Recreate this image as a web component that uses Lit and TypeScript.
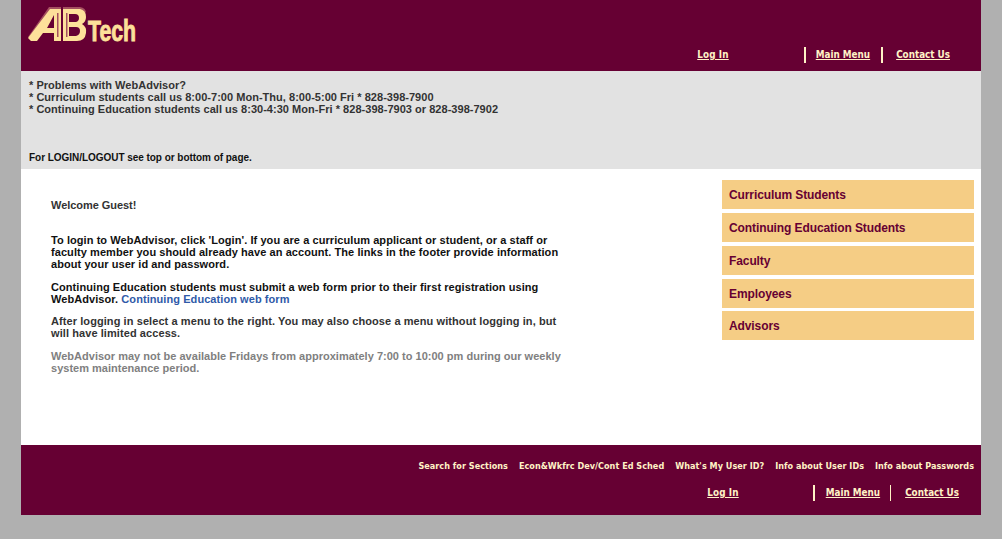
import { LitElement, html, css } from "lit";
import { customElement } from "lit/decorators.js";

@customElement("app-root")
export class AppRoot extends LitElement {
  static styles = css`
    :host { display: block; min-height: 539px; background: #b0b0b0; font-family: "Liberation Sans", Arial, sans-serif; }
    .page { width: 960px; margin-left: 21px; }
    a { color: inherit; }
    header { height: 71px; background: #660033; display: flex; justify-content: space-between; box-sizing: border-box; }
    .logo { display: block; margin: 7px 0 0 7px; width: 110px; height: 36px; overflow: visible; }
    .logo-text { font-family: "Liberation Sans", Arial, sans-serif; font-weight: 700; font-size: 29px; fill: #fde09a; stroke: #fde09a; stroke-width: .9px; }
    .nav { display: flex; align-items: center; font-family: "DejaVu Sans Condensed", "DejaVu Sans", Verdana, sans-serif; font-weight: 700; font-size: 9.8px; color: #fff2c6; height: 16px; white-space: nowrap; }
    .nav a { line-height: 16px; }
    .nav .sep { width: 2px; height: 16px; background: #fff2c6; }
    .nav .login { margin-right: 75px; letter-spacing: .15px; }
    .nav .main { margin: 0 11px 0 10px; }
    .nav .contact { margin-left: 13px; }
    header .nav { align-self: flex-end; margin: 0 31px 8px 0; }
    .band { height: 98px; background: #e2e2e2; box-sizing: border-box; padding: 8px 8px 0; color: #333; font-size: 11px; line-height: 12px; font-weight: 700; letter-spacing: .03px; }
    .band .login-note { margin-top: 37px; color: #111; font-size: 10px; letter-spacing: -.04px; }
    .content { height: 276px; background: #fff; display: flex; justify-content: space-between; }
    .copy { width: 540px; padding: 30px 0 0 30px; font-size: 11px; line-height: 12px; font-weight: 700; letter-spacing: .07px; color: #111; }
    .copy p { margin: 0 0 11px; }
    .copy .welcome { margin-bottom: 23px; color: #333; letter-spacing: -.05px; }
    .copy .gap { margin-bottom: 10px; }
    .copy .dim { color: #333; letter-spacing: .08px; }
    .copy .muted { color: #808080; letter-spacing: .015px; }
    .copy a { color: #2f5aa8; text-decoration: none; }
    .menu { width: 252px; margin: 11px 7px 0 0; display: flex; flex-direction: column; gap: 4px; }
    .menu a { display: flex; align-items: center; height: 29px; padding-left: 7px; background: #f5cd85; color: #660033; font-size: 12px; font-weight: 700; letter-spacing: -.1px; text-decoration: none; }
    .menu a:last-child { margin-top: -1px; }
    footer { height: 70px; background: #660033; box-sizing: border-box; padding: 15px 7px 0 0; color: #fff2c6; display: flex; flex-direction: column; align-items: flex-end; }
    .links { display: flex; gap: 11px; font-family: "DejaVu Sans Condensed", "DejaVu Sans", Verdana, sans-serif; font-size: 9px; font-weight: 700; line-height: 12px; letter-spacing: .03px; white-space: nowrap; }
    .links a { text-decoration: none; }
    footer .nav { margin: 13px 15px 0 0; }
    footer .nav .login { margin-right: 74px; }
    footer .nav .main { margin: 0 10px 0 11px; }
    footer .nav .contact { margin-left: 14px; }
    footer .nav .sep.thin { width: 1px; }
  `;

  private nav(thin: boolean) {
    return html`<nav class="nav">
      <a class="login" href="#">Log In</a>
      <span class="sep"></span>
      <a class="main" href="#">Main Menu</a>
      <span class="sep ${thin ? "thin" : ""}"></span>
      <a class="contact" href="#">Contact Us</a>
    </nav>`;
  }

  render() {
    return html`<div class="page">
      <header>
        <svg class="logo" viewBox="0 0 110 36" aria-label="AB Tech">
          <path fill="#a4505f" d="M0 30 L21 0 L33 0 L33 3 L22 3 L4 30 Z M35 0 L52 0 Q58 1 58 6 L54 3 L35 3 Z"/>
          <path fill="#fde09a" fill-rule="evenodd" d="M0 31 L22 2 L33 2 L33 34 L26 34 L26 26 L15 26 L9 34 L3 34 Z M19 21 L26 21 L26 8 Z"/>
          <path fill="#fde09a" fill-rule="evenodd" d="M35 2 L52 2 Q58 3 58 10 Q58 15 54 17 Q59 20 58 26 Q57 34 49 34 L35 34 Z M41 7 L41 15 L48 15 Q51 14 51 11 Q51 7 47 7 Z M41 20 L41 29 L48 29 Q52 28 52 24 Q52 20 48 20 Z"/>
          <path fill="#a4505f" d="M29 6 h1.500 v24 h-1.500 Z M38 6 h1.500 v24 h-1.500 Z"/>
          <text class="logo-text" x="60" y="34" textLength="48" lengthAdjust="spacingAndGlyphs">Tech</text>
        </svg>
        ${this.nav(false)}
      </header>
      <section class="band">
        <div>* Problems with WebAdvisor?</div>
        <div>* Curriculum students call us 8:00-7:00 Mon-Thu, 8:00-5:00 Fri * 828-398-7900</div>
        <div>* Continuing Education students call us 8:30-4:30 Mon-Fri * 828-398-7903 or 828-398-7902</div>
        <div class="login-note">For LOGIN/LOGOUT see top or bottom of page.</div>
      </section>
      <section class="content">
        <div class="copy">
          <p class="welcome">Welcome Guest!</p>
          <p>To login to WebAdvisor, click 'Login'. If you are a curriculum applicant or student, or a staff or<br>faculty member you should already have an account. The links in the footer provide information<br>about your user id and password.</p>
          <p class="gap">Continuing Education students must submit a web form prior to their first registration using<br>WebAdvisor. <a href="#">Continuing Education web form</a></p>
          <p class="dim">After logging in select a menu to the right. You may also choose a menu without logging in, but<br>will have limited access.</p>
          <p class="muted">WebAdvisor may not be available Fridays from approximately 7:00 to 10:00 pm during our weekly<br>system maintenance period.</p>
        </div>
        <div class="menu">
          <a href="#">Curriculum Students</a>
          <a href="#">Continuing Education Students</a>
          <a href="#">Faculty</a>
          <a href="#">Employees</a>
          <a href="#">Advisors</a>
        </div>
      </section>
      <footer>
        <div class="links">
          <a href="#">Search for Sections</a>
          <a href="#">Econ&amp;Wkfrc Dev/Cont Ed Sched</a>
          <a href="#">What's My User ID?</a>
          <a href="#">Info about User IDs</a>
          <a href="#">Info about Passwords</a>
        </div>
        ${this.nav(true)}
      </footer>
    </div>`;
  }
}
